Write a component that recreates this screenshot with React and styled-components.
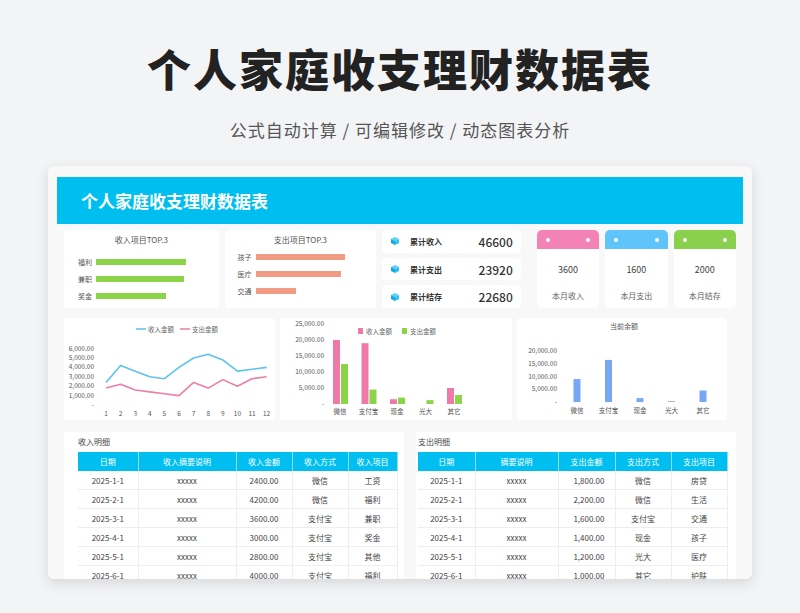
import React from 'react';
import styled, { createGlobalStyle } from 'styled-components';

const Global = createGlobalStyle`
  body { margin: 0; background: #f3f4f6; font-family: "Noto Sans CJK SC", "Noto Sans", sans-serif; color: #333; }
`;

const Page = styled.div`
  width: 800px; height: 613px; overflow: hidden;
  display: flex; flex-direction: column; align-items: center;
`;
const Title = styled.h1`
  margin: 38px 0 0; font-size: 44px; font-weight: 900; color: #222; letter-spacing: 2px; line-height: 60px;
`;
const Sub = styled.div`
  margin-top: 20px; font-size: 17px; color: #555; letter-spacing: 1px; line-height: 24px;
`;
const Card = styled.div`
  margin-top: 24px; width: 704px; height: 413px; background: #f8f8f8; border-radius: 6px;
  box-shadow: 0 4px 14px rgba(0,0,0,0.12); overflow: hidden; padding: 11px 9px 0; box-sizing: border-box;
`;
const Banner = styled.div`
  height: 47px; background: #00bff0; color: #fff; font-weight: 700; font-size: 17px;
  display: flex; align-items: center; padding-left: 24px;
`;
const Row = styled.div`
  display: flex; gap: ${p => p.gap || 6}px; margin: ${p => p.m || '6px 7px 0'}; height: ${p => p.h}px;
`;
const Panel = styled.div`
  width: ${p => p.w}px; background: #fff; border-radius: 4px; box-sizing: border-box; position: relative;
`;
const PanelTitle = styled.div`
  font-size: 8px; color: #555; text-align: center; margin-top: 4px;
`;
const BarRow = styled.div`
  display: flex; align-items: center; height: 17px; padding-left: ${p => p.pl}px; gap: 4px; font-size: 7px; color: #555;
`;
const Bar = styled.div`
  height: 6px; background: ${p => p.c};
`;
const StatCol = styled.div`
  width: 140px; display: flex; flex-direction: column; gap: 5px;
`;
const Stat = styled.div`
  flex: 1; background: #fff; border-radius: 4px; display: flex; align-items: center; padding: 0 8px;
  font-size: 8px; font-weight: 700; color: #333;
  span { margin-left: 10px; flex: 1; }
  b { font-size: 12px; font-weight: 500; }
`;
const MonthCard = styled.div`
  width: 63px; background: #fff; border-radius: 5px; overflow: hidden; display: flex; flex-direction: column;
  align-items: center; font-size: 8px; color: #444;
`;
const MonthTop = styled.div`
  width: 100%; height: 19px; background: ${p => p.c}; display: flex; justify-content: space-between; align-items: center;
  padding: 0 9px; box-sizing: border-box;
  &::before, &::after { content: ''; width: 4px; height: 4px; border-radius: 50%; background: #fff; }
`;
const Num = styled.div` margin-top: 14px; font-size: 9px; `;
const Lbl = styled.div` margin-top: 14px; color: #666; `;
const TablePanel = styled.div`
  width: ${p => p.w}px; background: #fff; padding: 4px 0 0 ${p => p.pl}px; box-sizing: border-box;
`;
const TTitle = styled.div` font-size: 8px; color: #444; height: 16px; `;
const Table = styled.table`
  border-collapse: collapse; width: ${p => p.w}px; font-size: 8px; color: #444; table-layout: fixed;
  th { background: #00bff0; color: #fff; font-weight: 400; height: 19px; padding: 0; border-right: 1px solid #8fdcf5; }
  td { height: 18px; padding: 0; text-align: center; border-bottom: 1px solid #eee; border-right: 1px solid #eee; }
  td.r { text-align: right; padding-right: 10px; }
`;

const Cube = () => (
  <svg width="10" height="10" viewBox="0 0 10 10">
    <path d="M5 1 L9 3 L5 5 L1 3Z" fill="#5fd0f5" />
    <path d="M1 3 L5 5 L5 9 L1 7Z" fill="#12a9e0" />
    <path d="M9 3 L5 5 L5 9 L9 7Z" fill="#2ec0f0" />
  </svg>
);

const Legend = ({ items, x, y }) => (
  <g fontSize="6.5" fill="#666">
    {items.map((it, i) => (
      <g key={i} transform={`translate(${x + i * 44},${y})`}>
        {it.line ? <line x1="0" y1="0" x2="10" y2="0" stroke={it.c} strokeWidth="1.5" /> : <rect x="4" y="-3" width="5" height="6" fill={it.c} />}
        <text x="12" y="2.5">{it.t}</text>
      </g>
    ))}
  </g>
);

const LineChart = () => {
  const yl = ['6,000.00', '5,000.00', '4,000.00', '3,000.00', '2,000.00', '1,000.00', '-'];
  const x = i => 42 + i * 14.6;
  const y = v => 87 - v * 0.0094;
  const inc = [2400, 4200, 3600, 3000, 2800, 4000, 5000, 5400, 4800, 3600, 3800, 4000];
  const exp = [1800, 2200, 1600, 1400, 1200, 1000, 2400, 1800, 2700, 2000, 2800, 3000];
  const path = d => d.map((v, i) => `${i ? 'L' : 'M'}${x(i)},${y(v)}`).join(' ');
  return (
    <svg width="211" height="102">
      <Legend x={72} y={11} items={[{ t: '收入金额', c: '#5bc3ee', line: 1 }, { t: '支出金额', c: '#ea7fa8', line: 1 }]} />
      {yl.map((t, i) => <text key={i} x="30" y={y(6000 - i * 1000) + 2} fontSize="6.5" fill="#555" textAnchor="end">{t}</text>)}
      <path d={path(inc)} fill="none" stroke="#5bc3ee" strokeWidth="1.6" strokeLinejoin="round" />
      <path d={path(exp)} fill="none" stroke="#ea7fa8" strokeWidth="1.6" strokeLinejoin="round" />
      {inc.map((_, i) => <text key={i} x={x(i)} y="98" fontSize="6.5" fill="#555" textAnchor="middle">{i + 1}</text>)}
    </svg>
  );
};

const BarChart = () => {
  const cats = ['微信', '支付宝', '现金', '光大', '其它'];
  const a = [20000, 19000, 1500, 0, 5000];
  const b = [12500, 4500, 2000, 1200, 2800];
  const y = v => 86 - v * 0.0032;
  return (
    <svg width="232" height="102">
      <Legend x={74} y={13} items={[{ t: '收入金额', c: '#ef7aa9' }, { t: '支出金额', c: '#8bd44a' }]} />
      {[25000, 20000, 15000, 10000, 5000, 0].map(v => (
        <text key={v} x="44" y={y(v) + 2} fontSize="6.5" fill="#555" textAnchor="end">{v ? v.toLocaleString('en-US') + '.00' : '-'}</text>
      ))}
      {cats.map((c, i) => {
        const cx = 60 + i * 28.5;
        return (
          <g key={c}>
            <rect x={cx - 7} y={y(a[i])} width="7" height={86 - y(a[i])} fill="#ef7aa9" />
            <rect x={cx + 1} y={y(b[i])} width="7" height={86 - y(b[i])} fill="#8bd44a" />
            <text x={cx} y="96" fontSize="6.5" fill="#555" textAnchor="middle">{c}</text>
          </g>
        );
      })}
    </svg>
  );
};

const Balance = () => {
  const cats = ['微信', '支付宝', '现金', '光大', '其它'];
  const v = [9000, 16500, 1500, 300, 4500];
  const y = n => 84 - n * 0.00255;
  return (
    <svg width="210" height="102">
      <text x="107" y="11" fontSize="7" fill="#555" textAnchor="middle">当前余额</text>
      {[20000, 15000, 10000, 5000, 0].map(n => (
        <text key={n} x="40" y={y(n) + 2} fontSize="6.5" fill="#555" textAnchor="end">{n ? n.toLocaleString('en-US') + '.00' : '-'}</text>
      ))}
      {cats.map((c, i) => {
        const cx = 60 + i * 31.5;
        return (
          <g key={c}>
            <rect x={cx - 3.5} y={y(v[i])} width="7" height={84 - y(v[i])} fill="#79a6f5" />
            <text x={cx} y="95" fontSize="6.5" fill="#555" textAnchor="middle">{c}</text>
          </g>
        );
      })}
    </svg>
  );
};

const dates = ['2025-1-1', '2025-2-1', '2025-3-1', '2025-4-1', '2025-5-1', '2025-6-1'];
const incRows = [['2400.00', '微信', '工资'], ['4200.00', '微信', '福利'], ['3600.00', '支付宝', '兼职'], ['3000.00', '支付宝', '奖金'], ['2800.00', '支付宝', '其他'], ['4000.00', '支付宝', '福利']];
const expRows = [['1,800.00', '微信', '房贷'], ['2,200.00', '微信', '生活'], ['1,600.00', '支付宝', '交通'], ['1,400.00', '现金', '孩子'], ['1,200.00', '光大', '医疗'], ['1,000.00', '其它', '护肤']];

const DetailTable = ({ heads, widths, rows, right, w }) => (
  <Table w={w}>
    <colgroup>{widths.map((x, i) => <col key={i} style={{ width: x }} />)}</colgroup>
    <thead><tr>{heads.map(h => <th key={h}>{h}</th>)}</tr></thead>
    <tbody>
      {rows.map((r, i) => (
        <tr key={i}>
          <td>{dates[i]}</td><td>xxxxx</td>
          <td className={right ? 'r' : ''}>{r[0]}</td><td>{r[1]}</td><td>{r[2]}</td>
        </tr>
      ))}
    </tbody>
  </Table>
);

export default function App() {
  return (
    <Page>
      <Global />
      <Title>个人家庭收支理财数据表</Title>
      <Sub>公式自动计算 /  可编辑修改  / 动态图表分析</Sub>
      <Card>
        <Banner>个人家庭收支理财数据表</Banner>
        <Row h={78}>
          <Panel w={156}>
            <PanelTitle>收入项目TOP.3</PanelTitle>
            <div style={{ height: 8 }} />
            {[['福利', 90], ['兼职', 88], ['奖金', 70]].map(([t, w]) => (
              <BarRow key={t} pl={14}>{t}<Bar c="#8bd44a" style={{ width: w }} /></BarRow>
            ))}
          </Panel>
          <Panel w={153}>
            <PanelTitle>支出项目TOP.3</PanelTitle>
            <div style={{ height: 3 }} />
            {[['孩子', 89], ['医疗', 85], ['交通', 40]].map(([t, w]) => (
              <BarRow key={t} pl={13}>{t}<Bar c="#f29b84" style={{ width: w }} /></BarRow>
            ))}
          </Panel>
          <StatCol>
            {[['累计收入', 46600], ['累计支出', 23920], ['累计结存', 22680]].map(([t, n]) => (
              <Stat key={t}><Cube /><span>{t}</span><b>{n}</b></Stat>
            ))}
          </StatCol>
          <div style={{ width: 4 }} />
          {[['#f283b4', 3600, '本月收入'], ['#5ec4fa', 1600, '本月支出'], ['#8bcf4f', 2000, '本月结存']].map(([c, n, l]) => (
            <MonthCard key={l}><MonthTop c={c} /><Num>{n}</Num><Lbl>{l}</Lbl></MonthCard>
          ))}
        </Row>
        <Row h={102} m="10px 7px 0" gap={5}>
          <Panel w={211}><LineChart /></Panel>
          <Panel w={232}><BarChart /></Panel>
          <Panel w={210}><Balance /></Panel>
        </Row>
        <Row h={160} m="12px 7px 0" gap={12}>
          <TablePanel w={340} pl={14}>
            <TTitle>收入明细</TTitle>
            <DetailTable w={319} widths={[60, 98, 56, 56, 49]} heads={['日期', '收入摘要说明', '收入金额', '收入方式', '收入项目']} rows={incRows} />
          </TablePanel>
          <TablePanel w={320} pl={2}>
            <TTitle>支出明细</TTitle>
            <DetailTable w={309} right widths={[57, 83, 57, 56, 56]} heads={['日期', '摘要说明', '支出金额', '支出方式', '支出项目']} rows={expRows} />
          </TablePanel>
        </Row>
      </Card>
    </Page>
  );
}
